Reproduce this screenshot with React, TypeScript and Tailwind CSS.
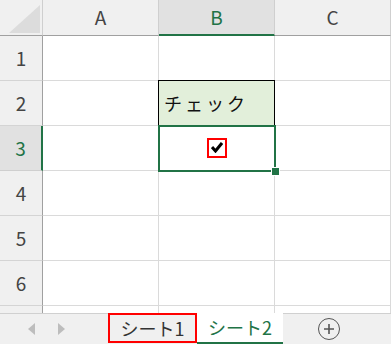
import React from "react";

const font = { fontFamily: '"Noto Sans CJK JP", "Noto Sans", sans-serif' };

function ColHeader({ label, selected }: { label: string; selected?: boolean }) {
  return (
    <div
      className={`flex items-center justify-center border-r border-b text-[19px] ${
        selected
          ? "bg-[#e1e1e1] text-[#217346] border-r-[#cfcfcf] border-b-2 border-b-[#217346]"
          : "bg-[#f0f0f0] text-[#444] border-r-[#cfcfcf] border-b-[#a0a0a0]"
      }`}
    >
      {label}
    </div>
  );
}

function RowHeader({ n, selected }: { n: string; selected?: boolean }) {
  return (
    <div
      className={`flex items-center justify-center border-b text-[19px] ${
        selected
          ? "bg-[#e1e1e1] text-[#217346] border-r-2 border-r-[#217346] border-b-[#cfcfcf]"
          : "bg-[#f0f0f0] text-[#444] border-r border-r-[#a0a0a0] border-b-[#d4d4d4]"
      }`}
    >
      {n}
    </div>
  );
}

function Cell({ children, className = "" }: { children?: React.ReactNode; className?: string }) {
  return <div className={`border-r border-b border-[#dadada] bg-white ${className}`}>{children}</div>;
}

export default function App() {
  return (
    <div className="w-[391px] h-[344px] overflow-hidden bg-white" style={font}>
      <div className="h-[313px] overflow-hidden">
        <div className="grid grid-cols-[43px_116px_116px_1fr] grid-rows-[36px_repeat(6,45px)_45px]">
          {/* header row */}
          <div className="relative bg-[#f0f0f0] border-r border-b border-r-[#cfcfcf] border-b-[#a0a0a0]">
            <svg className="absolute left-[9px] top-[5px]" width="31" height="28" viewBox="0 0 31 28">
              <polygon points="31,0 31,28 0,28" fill="#dcdcdc" />
            </svg>
          </div>
          <ColHeader label="A" />
          <ColHeader label="B" selected />
          <ColHeader label="C" />

          {/* row 1 */}
          <RowHeader n="1" />
          <Cell />
          <Cell />
          <Cell />

          {/* row 2 */}
          <RowHeader n="2" />
          <Cell />
          <div className="relative bg-[#e2efda] flex items-center pl-[5px] text-[18px] tracking-[3px] text-[#111]">
            <div className="absolute -top-px -left-px right-0 bottom-0 border border-black pointer-events-none" />
            チェック
          </div>
          <Cell />

          {/* row 3 */}
          <RowHeader n="3" selected />
          <Cell />
          <div className="relative bg-white flex items-center justify-center">
            <div className="absolute -top-px -left-px -right-px -bottom-px border-2 border-[#217346]" />
            <div className="absolute right-[-5px] bottom-[-5px] w-[9px] h-[9px] bg-[#217346] border border-white" />
            <div className="relative w-[20px] h-[20px] border-2 border-[#ff0000] flex items-center justify-center mt-[-2px] ml-[-1px]">
              <svg width="12" height="11" viewBox="0 0 12 11">
                <path d="M1 5 L4.5 9 L11 1" stroke="#000" strokeWidth="3" fill="none" strokeLinejoin="miter" />
              </svg>
            </div>
          </div>
          <Cell />

          {/* rows 4-6 */}
          {["4", "5", "6"].map((n) => (
            <React.Fragment key={n}>
              <RowHeader n={n} />
              <Cell />
              <Cell />
              <Cell />
            </React.Fragment>
          ))}
          {/* partially visible row 7 */}
          <RowHeader n="" />
          <Cell />
          <Cell />
          <Cell />
        </div>
      </div>

      {/* sheet tab bar */}
      <div className="h-[31px] flex bg-[#f0f0f0] border-t border-[#d0d0d0] relative">
        <div className="w-[108px] flex items-center">
          <svg className="ml-[28px]" width="7" height="12" viewBox="0 0 7 12">
            <polygon points="7,0 7,12 0,6" fill="#bdbdbd" />
          </svg>
          <svg className="ml-[23px]" width="7" height="12" viewBox="0 0 7 12">
            <polygon points="0,0 0,12 7,6" fill="#bdbdbd" />
          </svg>
        </div>
        <div className="w-[89px] h-[30px] -mt-px border-2 border-[#ff0000] flex items-center justify-center text-[18px] text-[#333]">
          シート1
        </div>
        <div className="w-[86px] h-[31px] -mt-px bg-white border-b-2 border-[#217346] flex items-center justify-center text-[18px] text-[#217346]">
          シート2
        </div>
        <div className="flex-1 flex items-center">
          <div className="ml-[35px] w-[22px] h-[22px] rounded-full border-[1.5px] border-[#555] flex items-center justify-center">
            <svg width="12" height="12" viewBox="0 0 12 12">
              <path d="M6 1 V11 M1 6 H11" stroke="#555" strokeWidth="1.6" />
            </svg>
          </div>
        </div>
      </div>
    </div>
  );
}
